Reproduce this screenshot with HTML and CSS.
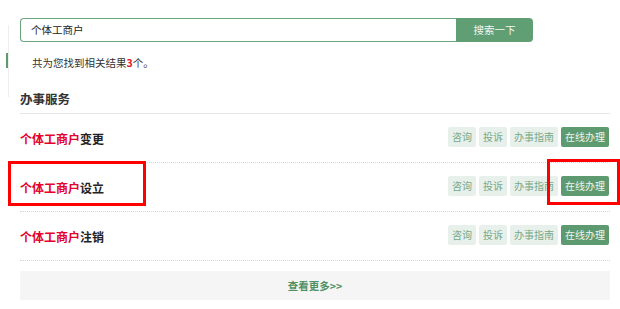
FILE: index.html
```html
<!DOCTYPE html>
<html lang="zh-CN">
<head>
  <meta charset="UTF-8">
  <title>办事服务搜索</title>
  <link rel="stylesheet" href="styles.css">
</head>
<body>

  <div class="side">
    <div class="mark"></div>
  </div>

  <div class="main">
    <div class="search">
      <div class="search-input">个体工商户</div>
      <div class="search-btn">搜索一下</div>
    </div>

    <p class="result">共为您找到相关结果<b>3</b>个。</p>

    <h3 class="section-title">办事服务</h3>

    <div class="item">
      <div class="item-name"><span class="hl">个体工商户</span>变更</div>
      <div class="tags">
        <span class="tag">咨询</span>
        <span class="tag">投诉</span>
        <span class="tag">办事指南</span>
        <span class="tag tag-main">在线办理</span>
      </div>
    </div>
    <div class="item">
      <div class="item-name"><span class="hl">个体工商户</span>设立</div>
      <div class="tags">
        <span class="tag">咨询</span>
        <span class="tag">投诉</span>
        <span class="tag">办事指南</span>
        <span class="tag tag-main">在线办理</span>
      </div>
    </div>
    <div class="item">
      <div class="item-name"><span class="hl">个体工商户</span>注销</div>
      <div class="tags">
        <span class="tag">咨询</span>
        <span class="tag">投诉</span>
        <span class="tag">办事指南</span>
        <span class="tag tag-main">在线办理</span>
      </div>
    </div>

    <div class="more">查看更多&gt;&gt;</div>
  </div>

  <!-- annotation boxes -->
  <div class="mark-box box-name"></div>
  <div class="mark-box box-btn"></div>

</body>
</html>
```

FILE: styles.css
```css
body {
  margin: 0;
  display: flex;
  align-items: flex-start;
  font-family: "Noto Sans CJK SC", "Liberation Sans", sans-serif;
  color: #333;
  background: #fff;
}

.side {
  width: 8px;
  height: 72px;
  margin-top: 25px;
  border-right: 1px solid #eee;
  flex-shrink: 0;
}

.side .mark {
  width: 2px;
  height: 15px;
  margin: 28px 0 0 6px;
  background: #5e9a6f;
}

.main {
  width: 590px;
  margin-left: 11px;
  padding-top: 18px;
}

.search {
  display: flex;
  height: 24px;
  width: 513px;
}

.search-input {
  flex: 1;
  border: 1.5px solid #68a57c;
  border-right: none;
  border-radius: 4px 0 0 4px;
  padding-left: 10px;
  font-size: 10.5px;
  line-height: 21px;
  color: #222;
}

.search-btn {
  width: 77px;
  background: #609e73;
  color: #f2f7f3;
  border-radius: 0 4px 4px 0;
  text-align: center;
  font-size: 10.5px;
  line-height: 24px;
}

.result {
  margin: 13px 0 0 12px;
  font-size: 10.5px;
  line-height: 16px;
}

.result b {
  color: #e8192c;
}

.section-title {
  margin: 19px 0 0;
  font-size: 12.5px;
  line-height: 17px;
  padding-bottom: 6px;
  border-bottom: 1px solid #e6e6e6;
}

.item {
  display: flex;
  align-items: center;
  justify-content: space-between;
  height: 48px;
  border-bottom: 1px dotted #d6d6d6;
}

.item-name {
  font-size: 12px;
  font-weight: bold;
  color: #222;
}

.item-name .hl {
  color: #e4002b;
}

.tags {
  display: flex;
  gap: 3px;
  margin-right: 1px;
  margin-top: -3px;
}

.tag {
  height: 20px;
  line-height: 20px;
  padding: 0 4px;
  font-size: 10px;
  color: #76a887;
  background: #e8f0eb;
  border-radius: 2px;
}

.tag-main {
  background: #5e9a6f;
  color: #eef6f0;
}

.more {
  margin-top: 10px;
  height: 29px;
  line-height: 29px;
  text-align: center;
  background: #f5f5f5;
  color: #4f9165;
  font-size: 10.5px;
  font-weight: bold;
}

.mark-box {
  position: absolute;
  border: 3px solid #ff0000;
  box-sizing: border-box;
}

.box-name {
  left: 8px;
  top: 161px;
  width: 138px;
  height: 45px;
}

.box-btn {
  left: 547px;
  top: 159px;
  width: 73px;
  height: 46px;
}
```
